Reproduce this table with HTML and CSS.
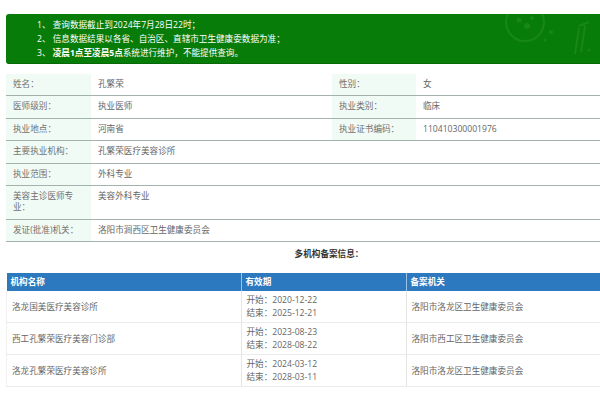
FILE: index.html
```html
<!DOCTYPE html>
<html lang="zh">
<head>
<meta charset="utf-8">
<title>医师查询</title>
<link rel="stylesheet" href="styles.css">
</head>
<body>
<div class="page">
  <div class="notice">
    <p>1、 查询数据截止到2024年7月28日22时；</p>
    <p>2、 信息数据结果以各省、自治区、直辖市卫生健康委数据为准；</p>
    <p>3、 <b>凌晨1点至凌晨5点</b>系统进行维护，不能提供查询。</p>
    <svg class="deco" width="110" height="50" viewBox="0 0 110 50">
      <circle cx="20" cy="8" r="19" fill="none" stroke="#188718" stroke-width="2"/>
      <circle cx="14" cy="6" r="2.5" fill="#188718"/>
      <circle cx="22" cy="12" r="3" fill="#188718"/>
      <circle cx="27" cy="4" r="2" fill="#188718"/>
      <circle cx="46" cy="18" r="2" fill="#188718"/>
      <circle cx="40" cy="26" r="1.5" fill="#188718"/>
      <path d="M70 40 L74 14 M76 38 L80 12 M74 12 L84 8" stroke="#188718" stroke-width="2" fill="none"/>
      <circle cx="84" cy="36" r="1.5" fill="#188718"/>
    </svg>
  </div>

  <div class="info">
    <div class="lbl">姓名：</div><div class="val">孔繁荣</div>
    <div class="lbl">性别：</div><div class="val">女</div>

    <div class="lbl">医师级别：</div><div class="val">执业医师</div>
    <div class="lbl">执业类别：</div><div class="val">临床</div>

    <div class="lbl">执业地点：</div><div class="val">河南省</div>
    <div class="lbl">执业证书编码：</div><div class="val">110410300001976</div>

    <div class="lbl">主要执业机构：</div><div class="val wide">孔繁荣医疗美容诊所</div>
    <div class="lbl">执业范围：</div><div class="val wide">外科专业</div>
    <div class="lbl">美容主诊医师专业：</div><div class="val wide">美容外科专业</div>
    <div class="lbl">发证(批准)机关：</div><div class="val wide">洛阳市涧西区卫生健康委员会</div>
  </div>

  <h3 class="subtitle">多机构备案信息：</h3>

  <table class="records">
    <thead>
      <tr><th class="c1">机构名称</th><th class="c2">有效期</th><th class="c3">备案机关</th></tr>
    </thead>
    <tbody>
      <tr><td>洛龙国美医疗美容诊所</td><td>开始：2020-12-22<br>结束：2025-12-21</td><td>洛阳市洛龙区卫生健康委员会</td></tr>
      <tr><td>西工孔繁荣医疗美容门诊部</td><td>开始：2023-08-23<br>结束：2028-08-22</td><td>洛阳市西工区卫生健康委员会</td></tr>
      <tr><td>洛龙孔繁荣医疗美容诊所</td><td>开始：2024-03-12<br>结束：2028-03-11</td><td>洛阳市洛龙区卫生健康委员会</td></tr>
    </tbody>
  </table>
</div>
</body>
</html>
```

FILE: styles.css
```css
html, body {
  margin: 0;
  padding: 0;
  background: #fff;
  overflow: hidden;
}
body {
  font-family: "Open Sans", "Noto Sans CJK SC", sans-serif;
  font-size: 8.6px;
  color: #666;
}
.page {
  width: 646px;
  padding: 14px 0 0 6px;
}
.notice {
  position: relative;
  background: #087c08;
  border-bottom: 1px solid #066806;
  border-radius: 3px;
  padding: 4px 0 3px 31px;
  color: #fff;
  overflow: hidden;
}
.notice p {
  margin: 0;
  line-height: 14px;
}
.notice b {
  font-weight: 700;
}
.deco {
  position: absolute;
  left: 499px;
  top: 0;
}
.info {
  margin-top: 10px;
  display: grid;
  grid-template-columns: 85px 241px 84px 1fr;
}
.lbl, .val {
  padding: 5px 7px;
  line-height: 11.4px;
  border-bottom: 1px solid #a4b2ad;
}
.lbl {
  padding-right: 12px;
  background: #f1fbf6;
  color: #707070;
}
.val {
  color: #666;
}
.val.wide {
  grid-column: span 3;
}
.subtitle {
  margin: 0;
  padding: 6px 0 0;
  height: 31px;
  box-sizing: border-box;
  text-align: center;
  font-size: 8.6px;
  line-height: 12px;
  font-weight: 700;
  color: #333;
}
.records {
  width: 100%;
  border-collapse: collapse;
  table-layout: fixed;
}
.records th {
  background: #2d79bf;
  color: #fff;
  font-weight: 700;
  text-align: left;
  height: 18px;
  padding: 0 4px;
  line-height: 12px;
}
.records th + th {
  border-left: 1px solid #9cc3e6;
}
.records .c1 { width: 226px; }
.records .c2 { width: 156px; }
.records td {
  padding: 3px 5px;
  line-height: 12.5px;
  height: 25px;
  color: #666;
  border-bottom: 1px solid #ebebeb;
  vertical-align: middle;
}
.records td:first-child {
  border-left: 1px solid #f0f0f0;
}
.records td + td {
  border-left: 1px solid #e4e4e4;
}
```
